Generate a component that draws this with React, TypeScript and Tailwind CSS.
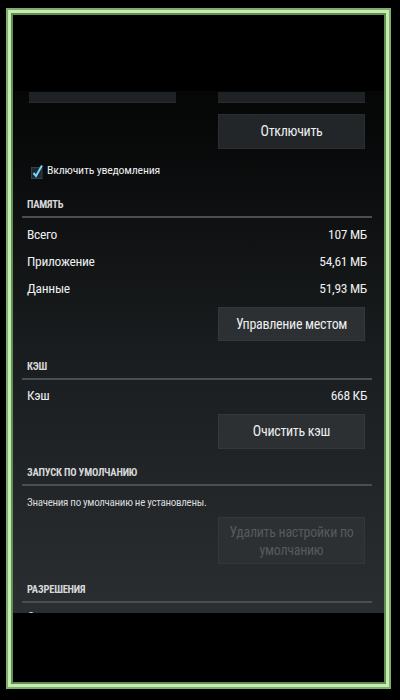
import React from "react";

const font = { fontFamily: "Roboto, 'Noto Sans', sans-serif" };

function Header({ children, className = "" }: { children: React.ReactNode; className?: string }) {
  return (
    <>
      <div className={`h-[22px] flex items-center text-[10.5px] font-bold tracking-[-0.2px] text-[#d6d8d9] ${className}`}>
        {children}
      </div>
      <div className="h-[2px] -ml-[5px] -mr-[5px] bg-[#4a4e51]" />
    </>
  );
}

function Row({ label, value }: { label: string; value?: string }) {
  return (
    <div className="h-[27px] flex items-center justify-between text-[13.5px] tracking-[-0.3px] text-[#eceeef]">
      <span>{label}</span>
      {value && <span>{value}</span>}
    </div>
  );
}

function Btn({
  children,
  className = "",
  disabled = false,
}: {
  children: React.ReactNode;
  className?: string;
  disabled?: boolean;
}) {
  return (
    <div
      className={`self-end mr-[2px] w-[147px] flex items-center justify-center text-center border text-[14px] tracking-[-0.3px] ${
        disabled ? "text-[#555a5d]" : "text-[#eceeef]"
      } ${className}`}
    >
      {children}
    </div>
  );
}

export default function App() {
  return (
    <div className="w-[400px] h-[700px] bg-black pt-[8px] pl-[6px] font-stretch-[77%]" style={font}>
      <div className="w-[385px] h-[681px] border-[2px] border-[#7fae6c]">
        <div className="w-full h-full border-[3px] border-[#c6ebb3]">
          <div className="w-full h-full border-[2px] border-[#5f9050] bg-black">
            <div className="h-[76px]" />

            {/* Screen panel */}
            <div className="h-[522px] overflow-hidden bg-gradient-to-b from-[#050606] via-[#1a1d1f] to-[#2a2e31]">
              <div className="flex flex-col pl-[14px] pr-[17px]">
                <div className="mt-[1px] h-[11px] flex justify-between ml-[2px] mr-[2px]">
                  <div className="w-[147px] bg-[#1f2224] border-b border-[#2a2d2f]" />
                  <div className="w-[147px] bg-[#1f2224] border-b border-[#2a2d2f]" />
                </div>

                <Btn className="mt-[11px] h-[35px] bg-[#222628] border-[#2a2e30]">Отключить</Btn>

                <div className="mt-[12px] h-[20px] flex items-center gap-[4px] ml-[4px] text-[11.8px] tracking-[-0.2px] text-[#eceeef]">
                  <svg width="12" height="15" viewBox="0 0 12 15">
                    <rect x="0.5" y="3.5" width="10.5" height="11" fill="#1c2a31" stroke="#2d4450" />
                    <path d="M2.5 9 L5 12 L11 1.5" fill="none" stroke="#7fd3f5" strokeWidth="2" />
                  </svg>
                  <span>Включить уведомления</span>
                </div>

                <Header className="mt-[13px]">ПАМЯТЬ</Header>
                <div className="h-[3px]" />
                <Row label="Всего" value="107 МБ" />
                <Row label="Приложение" value="54,61 МБ" />
                <Row label="Данные" value="51,93 МБ" />
                <Btn className="mt-[5px] h-[34px] bg-[#2c3033] border-[#34383b]">Управление местом</Btn>

                <Header className="mt-[15px]">КЭШ</Header>
                <div className="h-[2px]" />
                <Row label="Кэш" value="668 КБ" />
                <Btn className="mt-[5px] h-[35px] bg-[#2c3033] border-[#34383b]">Очистить кэш</Btn>

                <Header className="mt-[13px]">ЗАПУСК ПО УМОЛЧАНИЮ</Header>
                <div className="mt-[7px] h-[20px] flex items-center text-[11px] tracking-[-0.3px] text-[#d8dadb]">
                  Значения по умолчанию не установлены.
                </div>
                <Btn disabled className="mt-[4px] h-[47px] leading-[18px] px-[8px] bg-[#2c3033] border-[#33373a]">
                  Удалить настройки по умолчанию
                </Btn>

                <Header className="mt-[15px]">РАЗРЕШЕНИЯ</Header>
                <div className="mt-[6px] text-[13px] leading-[15px] text-[#d8dadb]">Это приложение может:</div>
              </div>
            </div>
          </div>
        </div>
      </div>
    </div>
  );
}
